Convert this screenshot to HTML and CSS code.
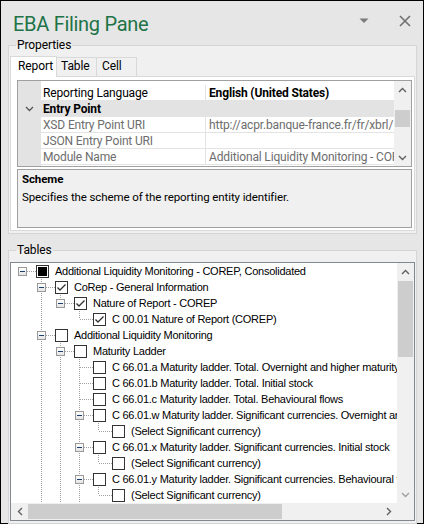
FILE: index.html
```html
<!DOCTYPE html>
<html>
<head>
<meta charset="utf-8">
<link rel="stylesheet" href="styles.css">
</head>
<body>
<div class="pane">
  <header class="titlebar">
    <div class="title">EBA Filing Pane</div>
    <svg class="tb-drop" width="10" height="6" viewBox="0 0 10 6"><path d="M0.5 0.5H9.5L5 5Z" fill="#7a7a7a"/></svg>
    <svg class="tb-close" width="12" height="12" viewBox="0 0 12 12"><path d="M1 1L11 11M11 1L1 11" stroke="#707070" stroke-width="1.6"/></svg>
  </header>

  <fieldset class="group group-props">
    <legend class="group-label">Properties</legend>
    <div class="tabs">
      <div class="tab tab-sel tab-report">Report</div>
      <div class="tab tab-table">Table</div>
      <div class="tab tab-cell">Cell</div>
    </div>
    <div class="tabpage">
      <div class="pgrid">
        <div class="pg-rows">
          <div class="pg-row">
            <div class="pg-gut"></div>
            <div class="pg-name">Reporting Language</div>
            <div class="pg-val pg-bold">English (United States)</div>
          </div>
          <div class="pg-row pg-cat">
            <div class="pg-gut"><svg width="9" height="6" viewBox="0 0 9 6"><path d="M1 1L4.5 4.5L8 1" fill="none" stroke="#555" stroke-width="1.3"/></svg></div>
            <div class="pg-catname">Entry Point</div>
          </div>
          <div class="pg-row pg-ro">
            <div class="pg-gut"></div>
            <div class="pg-name">XSD Entry Point URI</div>
            <div class="pg-val">http://acpr.banque-france.fr/fr/xbrl/</div>
          </div>
          <div class="pg-row pg-ro">
            <div class="pg-gut"></div>
            <div class="pg-name">JSON Entry Point URI</div>
            <div class="pg-val"></div>
          </div>
          <div class="pg-row pg-ro">
            <div class="pg-gut"></div>
            <div class="pg-name">Module Name</div>
            <div class="pg-val">Additional Liquidity Monitoring - COREP, Consolidated</div>
          </div>
        </div>
        <div class="sb-v sb-pg">
          <div class="sb-btn"><svg width="9" height="6" viewBox="0 0 9 6"><path d="M1 5L4.5 1.5L8 5" fill="none" stroke="#606060" stroke-width="1.4"/></svg></div>
          <div class="sb-track"><div class="sb-thumb sb-thumb-pg"></div></div>
          <div class="sb-btn"><svg width="9" height="6" viewBox="0 0 9 6"><path d="M1 1L4.5 4.5L8 1" fill="none" stroke="#606060" stroke-width="1.4"/></svg></div>
        </div>
      </div>
      <div class="help">
        <div class="help-title">Scheme</div>
        <div class="help-desc">Specifies the scheme of the reporting entity identifier.</div>
      </div>
    </div>
  </fieldset>

  <fieldset class="group group-tables">
    <legend class="group-label">Tables</legend>
    <div class="tree">
      <div class="tree-main">
        <div class="tree-rows">
          <div class="row">
            <div class="conn conn-root"><span class="exp"></span></div>
            <span class="cb cb-ind"></span><span class="lbl">Additional Liquidity Monitoring - COREP, Consolidated</span>
          </div>
          <div class="row">
            <div class="anc"></div>
            <div class="conn conn-more"><span class="exp"></span></div>
            <span class="cb cb-on"></span><span class="lbl">CoRep - General Information</span>
          </div>
          <div class="row">
            <div class="anc"></div><div class="anc anc-line"></div>
            <div class="conn"><span class="exp"></span></div>
            <span class="cb cb-on"></span><span class="lbl">Nature of Report - COREP</span>
          </div>
          <div class="row">
            <div class="anc"></div><div class="anc anc-line"></div><div class="anc"></div>
            <div class="conn"></div>
            <span class="cb cb-on"></span><span class="lbl">C 00.01 Nature of Report (COREP)</span>
          </div>
          <div class="row">
            <div class="anc"></div>
            <div class="conn conn-more"><span class="exp"></span></div>
            <span class="cb"></span><span class="lbl">Additional Liquidity Monitoring</span>
          </div>
          <div class="row">
            <div class="anc"></div><div class="anc anc-line"></div>
            <div class="conn conn-more"><span class="exp"></span></div>
            <span class="cb"></span><span class="lbl">Maturity Ladder</span>
          </div>
          <div class="row">
            <div class="anc"></div><div class="anc anc-line"></div><div class="anc anc-line"></div>
            <div class="conn conn-more"></div>
            <span class="cb"></span><span class="lbl">C 66.01.a Maturity ladder. Total. Overnight and higher maturity</span>
          </div>
          <div class="row">
            <div class="anc"></div><div class="anc anc-line"></div><div class="anc anc-line"></div>
            <div class="conn conn-more"></div>
            <span class="cb"></span><span class="lbl">C 66.01.b Maturity ladder. Total. Initial stock</span>
          </div>
          <div class="row">
            <div class="anc"></div><div class="anc anc-line"></div><div class="anc anc-line"></div>
            <div class="conn conn-more"></div>
            <span class="cb"></span><span class="lbl">C 66.01.c Maturity ladder. Total. Behavioural flows</span>
          </div>
          <div class="row">
            <div class="anc"></div><div class="anc anc-line"></div><div class="anc anc-line"></div>
            <div class="conn conn-more"><span class="exp"></span></div>
            <span class="cb"></span><span class="lbl">C 66.01.w Maturity ladder. Significant currencies. Overnight and higher maturity</span>
          </div>
          <div class="row">
            <div class="anc"></div><div class="anc anc-line"></div><div class="anc anc-line"></div><div class="anc anc-line"></div>
            <div class="conn"></div>
            <span class="cb"></span><span class="lbl">(Select Significant currency)</span>
          </div>
          <div class="row">
            <div class="anc"></div><div class="anc anc-line"></div><div class="anc anc-line"></div>
            <div class="conn conn-more"><span class="exp"></span></div>
            <span class="cb"></span><span class="lbl">C 66.01.x Maturity ladder. Significant currencies. Initial stock</span>
          </div>
          <div class="row">
            <div class="anc"></div><div class="anc anc-line"></div><div class="anc anc-line"></div><div class="anc anc-line"></div>
            <div class="conn"></div>
            <span class="cb"></span><span class="lbl">(Select Significant currency)</span>
          </div>
          <div class="row">
            <div class="anc"></div><div class="anc anc-line"></div><div class="anc anc-line"></div>
            <div class="conn conn-more"><span class="exp"></span></div>
            <span class="cb"></span><span class="lbl">C 66.01.y Maturity ladder. Significant currencies. Behavioural flows</span>
          </div>
          <div class="row">
            <div class="anc"></div><div class="anc anc-line"></div><div class="anc anc-line"></div><div class="anc anc-line"></div>
            <div class="conn"></div>
            <span class="cb"></span><span class="lbl">(Select Significant currency)</span>
          </div>
        </div>
        <div class="sb-v sb-tree">
          <div class="sb-btn"><svg width="9" height="6" viewBox="0 0 9 6"><path d="M1 5L4.5 1.5L8 5" fill="none" stroke="#606060" stroke-width="1.4"/></svg></div>
          <div class="sb-track"><div class="sb-thumb sb-thumb-tree"></div></div>
          <div class="sb-btn"><svg width="9" height="6" viewBox="0 0 9 6"><path d="M1 1L4.5 4.5L8 1" fill="none" stroke="#a0a0a0" stroke-width="1.4"/></svg></div>
        </div>
      </div>
      <div class="tree-bottom">
        <div class="sb-h">
          <div class="sb-hbtn"><svg width="6" height="9" viewBox="0 0 6 9"><path d="M5 1L1.5 4.5L5 8" fill="none" stroke="#606060" stroke-width="1.4"/></svg></div>
          <div class="sb-htrack"><div class="sb-hthumb"></div></div>
          <div class="sb-hbtn"><svg width="6" height="9" viewBox="0 0 6 9"><path d="M1 1L4.5 4.5L1 8" fill="none" stroke="#606060" stroke-width="1.4"/></svg></div>
        </div>
        <div class="sb-corner"></div>
      </div>
    </div>
  </fieldset>
</div>
</body>
</html>
```

FILE: styles.css
```css
* { box-sizing: border-box; }
html, body { margin: 0; padding: 0; }
body { width: 424px; height: 524px; overflow: hidden; background: #e6e6e6; }

.pane {
  width: 424px; height: 524px;
  border: 1px solid #000;
  background: #e6e6e6;
  display: flex; flex-direction: column;
  font-family: Roboto, "Noto Sans", sans-serif;
  font-size: 12px; color: #000;
}

.titlebar { height: 36px; flex: none; display: flex; align-items: flex-start; padding: 10px 12px 0 12px; }
.title { flex: 1; font-family: Roboto, "Noto Sans", sans-serif; font-size: 20px; color: #217346; line-height: 26px; letter-spacing: -0.3px; }
.tb-drop { margin-right: 30px; margin-top: 7px; }
.tb-close { margin-top: 4px; }

.group {
  margin: 0 6px 0 7px; padding: 2px 1px 1px 1px;
  border: 1px solid #d5d5d5;
  background: #f0f0f0;
  min-width: 0;
}
.group-label { padding: 0 1px; margin-left: 6px; line-height: 16px; font-size: 12px; letter-spacing: -0.1px; }

.group-props { height: 197px; flex: none; display: flex; flex-direction: column; }
.tabs { display: flex; align-items: flex-end; height: 21px; flex: none; }
.tab {
  height: 19px; border: 1px solid #d9d9d9; border-bottom: none; margin-left: -1px;
  background: #f0f0f0; line-height: 17px; letter-spacing: -0.1px;
}
.tab-report { width: 47px; margin-left: 0; padding-left: 7px; }
.tab-table { width: 41px; padding-left: 4px; }
.tab-cell { width: 41px; padding-left: 5px; }
.tab-sel { height: 21px; background: #fff; position: relative; z-index: 1; margin-bottom: -1px; line-height: 19px; }
.tabpage { flex: 1; background: #fff; border: 1px solid #d9d9d9; padding: 3px 2px 2px 6px; display: flex; flex-direction: column; }

.pgrid { height: 87px; flex: none; border: 1px solid #a0a0a0; display: flex; background: #fff; }
.pg-rows {
  flex: 1; min-width: 0; display: flex; flex-direction: column; padding-top: 4px;
  background: linear-gradient(to right, #e3e3e3 23px, #fff 23px);
  font-size: 12px; letter-spacing: -0.15px;
}
.pg-row { height: 16px; display: flex; flex: none; border-bottom: 1px solid #e3e3e3; line-height: 16px; white-space: nowrap; }
.pg-gut { width: 23px; flex: none; background: #e3e3e3; display: flex; align-items: center; justify-content: center; }
.pg-name { width: 165px; flex: none; padding-left: 2px; border-right: 1px solid #e3e3e3; overflow: hidden; }
.pg-val { flex: 1; min-width: 0; padding-left: 3px; overflow: hidden; }
.pg-bold { font-weight: bold; }
.pg-ro .pg-name, .pg-ro .pg-val { color: #6d6d6d; }
.pg-cat { background: #e3e3e3; }
.pg-catname { padding-left: 2px; font-weight: bold; }

.sb-v { width: 17px; flex: none; background: #f0f0f0; display: flex; flex-direction: column; }
.sb-btn { height: 17px; flex: none; display: flex; align-items: center; justify-content: center; }
.sb-track { flex: 1; display: flex; flex-direction: column; padding: 0 1px; }
.sb-thumb { background: #cdcdcd; }
.sb-thumb-pg { height: 17px; margin-top: 12px; }
.sb-thumb-tree { height: 76px; margin-top: 1px; }

.help {
  margin-top: 2px; height: 59px; flex: none; border: 1px solid #a0a0a0; background: #f0f0f0; padding: 1px 4px;
  font-size: 11.5px; letter-spacing: -0.1px;
}
.help-title { font-weight: bold; line-height: 16px; }
.help-desc { margin-top: 2px; line-height: 16px; }

.group-tables { flex: 1; margin-top: 8px; margin-bottom: 5px; display: flex; flex-direction: column; padding: 4px 1px 2px 1px; }
.tree { flex: 1; border: 1px solid #828790; background: #fff; display: flex; flex-direction: column; min-height: 0; }
.tree-main { flex: 1; display: flex; min-height: 0; }
.tree-rows { flex: 1; min-width: 0; overflow: hidden; padding-left: 2px; font-family: "Liberation Sans", Arial, sans-serif; font-size: 11px; letter-spacing: -0.25px; }
.row { height: 16px; display: flex; align-items: center; white-space: nowrap; }
.anc { width: 19px; height: 16px; flex: none; }
.anc-line { background: repeating-linear-gradient(to bottom, #a0a0a0 0 1px, transparent 1px 2px) 9px 0 / 1px 16px no-repeat; }
.conn {
  width: 23px; height: 16px; flex: none; display: flex; align-items: center;
  background:
    repeating-linear-gradient(to bottom, #a0a0a0 0 1px, transparent 1px 2px) 9px 0 / 1px 8px no-repeat,
    repeating-linear-gradient(to right, #a0a0a0 0 1px, transparent 1px 2px) 10px 8px / 13px 1px no-repeat;
}
.conn-more {
  background:
    repeating-linear-gradient(to bottom, #a0a0a0 0 1px, transparent 1px 2px) 9px 0 / 1px 16px no-repeat,
    repeating-linear-gradient(to right, #a0a0a0 0 1px, transparent 1px 2px) 10px 8px / 13px 1px no-repeat;
}
.conn-root {
  background: repeating-linear-gradient(to right, #a0a0a0 0 1px, transparent 1px 2px) 10px 8px / 13px 1px no-repeat;
}
.exp {
  width: 9px; height: 9px; margin-left: 5px; margin-top: 1px;
  border: 1px solid #999; background: linear-gradient(#fff, #e4e4e4);
  display: flex; align-items: center; justify-content: center;
}
.exp::before { content: ""; width: 5px; height: 1px; background: #1c3f6e; }
.cb { width: 13px; height: 13px; flex: none; border: 1px solid #333; background: #fff; display: flex; align-items: center; justify-content: center; }
.cb-ind::before { content: ""; width: 9px; height: 9px; background: #000; }
.cb-on { background: #fff url("data:image/svg+xml;utf8,<svg xmlns='http://www.w3.org/2000/svg' width='11' height='11' viewBox='0 0 11 11'><path d='M1.5 5.5L4 8L9.5 2.5' fill='none' stroke='%23333' stroke-width='1.4'/></svg>") center / 11px 11px no-repeat; }
.lbl { margin-left: 6px; color: #000; }

.tree-bottom { height: 17px; flex: none; display: flex; }
.sb-h { flex: 1; display: flex; background: #f0f0f0; }
.sb-hbtn { width: 17px; flex: none; display: flex; align-items: center; justify-content: center; }
.sb-htrack { flex: 1; display: flex; padding: 1px 0; }
.sb-hthumb { width: 254px; background: #cdcdcd; }
.sb-corner { width: 17px; flex: none; background: #f0f0f0; }
```
